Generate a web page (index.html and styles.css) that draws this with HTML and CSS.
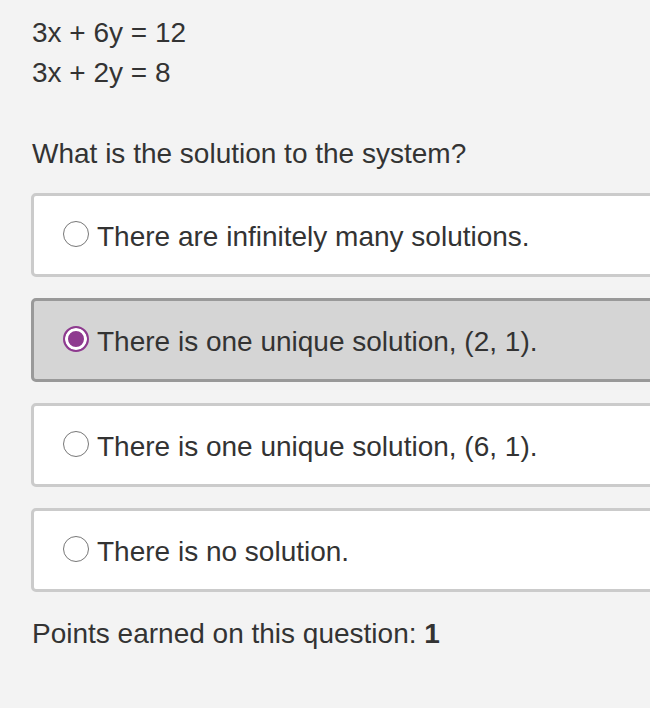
FILE: index.html
```html
<!DOCTYPE html>
<html>
<head>
<meta charset="utf-8">
<link rel="stylesheet" href="styles.css">
</head>
<body>
<div class="page">
  <div class="equations">
    <div class="eq">3x + 6y = 12</div>
    <div class="eq">3x + 2y = 8</div>
  </div>
  <p class="question">What is the solution to the system?</p>
  <div class="options">
    <label class="option">
      <span class="radio"></span>
      <span class="label-text">There are infinitely many solutions.</span>
    </label>
    <label class="option selected">
      <span class="radio"></span>
      <span class="label-text">There is one unique solution, (2, 1).</span>
    </label>
    <label class="option">
      <span class="radio"></span>
      <span class="label-text">There is one unique solution, (6, 1).</span>
    </label>
    <label class="option">
      <span class="radio"></span>
      <span class="label-text">There is no solution.</span>
    </label>
  </div>
  <p class="points">Points earned on this question: <strong>1</strong></p>
</div>
</body>
</html>
```
FILE: styles.css
```css
html, body {
  margin: 0;
  padding: 0;
  background: #f3f3f3;
  overflow: hidden;
}
.page {
  font-family: "Liberation Sans", Arial, sans-serif;
  font-size: 28px;
  color: #333;
  padding: 13px 0 0 32px;
  width: 700px;
}
.eq {
  line-height: 40px;
}
.question {
  margin: 41px 0 0 0;
  line-height: 40px;
}
.options {
  display: flex;
  flex-direction: column;
  gap: 21px;
  margin-top: 19px;
  margin-left: -1px;
}
.option {
  display: flex;
  align-items: center;
  gap: 8px;
  padding: 4px 0 0 29px;
  background: #fff;
  border: 3.5px solid #cbcbcb;
  border-radius: 5px;
  box-sizing: content-box;
  height: 74px;
}
.option.selected {
  background: #d5d5d5;
  border-color: #999;
}
.radio {
  width: 26px;
  height: 26px;
  border-radius: 50%;
  border: 1.5px solid #777;
  background: #fff;
  flex: none;
  box-sizing: border-box;
  margin-bottom: 7px;
}
.option.selected .radio {
  border: 2px solid #8e3a8f;
  background: #8e3a8f;
  box-shadow: inset 0 0 0 3px #fff;
}
.label-text {
  line-height: 30px;
}
.points {
  margin: 22px 0 0 0;
  line-height: 40px;
}
```
